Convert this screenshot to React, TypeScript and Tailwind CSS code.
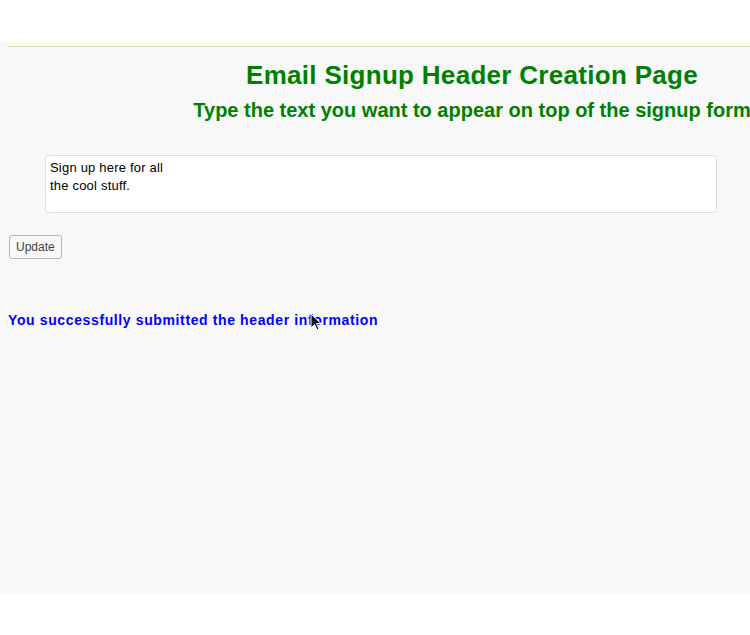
export default function App() {
  return (
    <div className="relative h-[635px] w-[750px] overflow-hidden bg-white font-['Liberation_Sans',Arial,sans-serif]">
      <div className="mt-[41px] h-[552px] bg-[#f8f8f8]">
        <div className="ml-2 h-[6px] border-b border-[#d4d2bf] bg-[#fffde8]" />
        <div className="ml-2 w-[928px]">
          <h1 className="mt-[14px] text-center text-[26px] font-bold leading-[28px] tracking-[0.3px] text-[#008000]">
            Email Signup Header Creation Page
          </h1>
          <h2 className="mt-[9px] text-center text-[20px] font-bold leading-[24px] text-[#008000]">
            Type the text you want to appear on top of the signup form
          </h2>
        </div>
        <div className="ml-[45px] mt-[33px] h-[58px] w-[672px] rounded border border-[#dddddd] bg-white px-[4px] py-[3px] text-[13px] leading-[18px] tracking-[0.2px] text-black">
          Sign up here for all
          <br />
          the cool stuff.
        </div>
        <button className="ml-[9px] mt-[22px] h-[24px] rounded-[3px] border border-[#b5b5b5] bg-[#f8f8f8] px-[6px] text-[12px] leading-[22px] text-[#444]">
          Update
        </button>
        <p className="ml-2 mt-[52px] text-[14px] font-bold leading-[18px] tracking-[0.62px] text-[#0000ff]">
          You successfully submitted the header information
        </p>
      </div>
      <svg className="absolute left-[310px] top-[313px]" width="12" height="19" viewBox="0 0 12 19">
        <path d="M1 1 L1 15 L4.5 11.5 L7 17 L9 16 L6.5 10.5 L11 10.5 Z" fill="#111" stroke="#fff" strokeWidth="1" />
      </svg>
    </div>
  );
}
